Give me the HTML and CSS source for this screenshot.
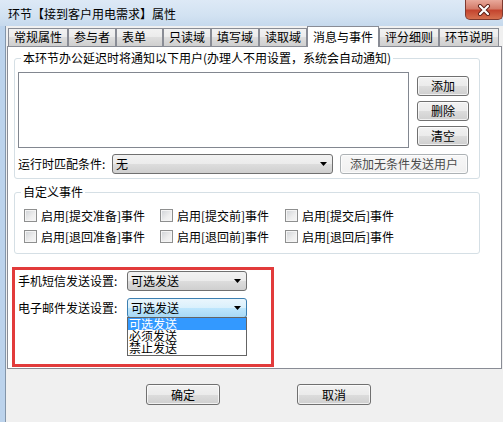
FILE: index.html
```html
<!DOCTYPE html>
<html lang="zh-CN">
<head>
  <meta charset="UTF-8" />
  <title>环节属性</title>
  <link rel="stylesheet" href="styles.css">
</head>
<body>
  <div class="window">
    <!-- Title bar -->
    <div class="titlebar">
      <span class="title">环节【接到客户用电需求】属性</span>
      <span class="close-btn">
        <svg width="14" height="12" viewBox="0 0 14 12">
          <path d="M3 2 L11 10 M11 2 L3 10" stroke="#5a1d15" stroke-width="4" stroke-linecap="round"/>
          <path d="M3 2 L11 10 M11 2 L3 10" stroke="#fff" stroke-width="2.2" stroke-linecap="round"/>
        </svg>
      </span>
    </div>

    <div class="client">
      <!-- Tabs -->
      <div class="tabs">
        <div class="tab">常规属性</div>
        <div class="tab">参与者</div>
        <div class="tab">表单</div>
        <div class="tab">只读域</div>
        <div class="tab">填写域</div>
        <div class="tab">读取域</div>
        <div class="tab active">消息与事件</div>
        <div class="tab">评分细则</div>
        <div class="tab">环节说明</div>
      </div>

      <div class="panel">
        <!-- Notify users -->
        <fieldset class="group notify">
          <legend>本环节办公延迟时将通知以下用户(办理人不用设置，系统会自动通知)</legend>
          <div class="notify-body">
            <div class="listbox"></div>
            <div class="btn-col">
              <button class="btn side-btn">添加</button>
              <button class="btn side-btn">删除</button>
              <button class="btn side-btn">清空</button>
            </div>
          </div>
          <div class="cond-row">
            <span class="cond-label">运行时匹配条件:</span>
            <div class="combo cond-combo">
              <span>无</span>
              <svg class="arrow" width="7" height="4" viewBox="0 0 7 4"><polygon points="0,0 7,0 3.5,4" fill="#000"/></svg>
            </div>
            <button class="btn add-all-btn">添加无条件发送用户</button>
          </div>
        </fieldset>

        <!-- Custom events -->
        <fieldset class="group events">
          <legend>自定义事件</legend>
          <div class="check-grid">
            <label class="check-item"><span class="check"></span>启用[提交准备]事件</label>
            <label class="check-item"><span class="check"></span>启用[提交前]事件</label>
            <label class="check-item"><span class="check"></span>启用[提交后]事件</label>
            <label class="check-item"><span class="check"></span>启用[退回准备]事件</label>
            <label class="check-item"><span class="check"></span>启用[退回前]事件</label>
            <label class="check-item"><span class="check"></span>启用[退回后]事件</label>
          </div>
        </fieldset>

        <!-- Send settings (marked) -->
        <div class="marked">
          <div class="set-row">
            <span class="set-label">手机短信发送设置:</span>
            <div class="combo set-combo">
              <span>可选发送</span>
              <svg class="arrow" width="7" height="4" viewBox="0 0 7 4"><polygon points="0,0 7,0 3.5,4" fill="#000"/></svg>
            </div>
          </div>
          <div class="set-row">
            <span class="set-label">电子邮件发送设置:</span>
            <div class="combo set-combo focused">
              <span>可选发送</span>
              <svg class="arrow" width="7" height="4" viewBox="0 0 7 4"><polygon points="0,0 7,0 3.5,4" fill="#000"/></svg>
              <ul class="dropdown">
                <li class="selected">可选发送</li>
                <li>必须发送</li>
                <li>禁止发送</li>
              </ul>
            </div>
          </div>
        </div>
      </div>

      <!-- Footer -->
      <div class="footer">
        <button class="btn footer-btn">确定</button>
        <button class="btn footer-btn">取消</button>
      </div>
    </div>
  </div>
</body>
</html>
```

FILE: styles.css
```css
*, *::before, *::after {
  box-sizing: border-box;
}
body {
  margin: 0;
  font-family: "Noto Sans CJK SC", "Noto Sans", sans-serif;
  font-size: 12px;
  line-height: 16px;
  color: #000;
}
.window {
  width: 503px;
  height: 422px;
  display: flex;
  flex-direction: column;
  overflow: hidden;
  background: #bcd3ec;
}
.titlebar {
  height: 26px;
  display: flex;
  padding-left: 8px;
  background: linear-gradient(180deg, #dde9f6 0%, #d2e2f2 60%, #c6d9ed 100%);
}
.title {
  flex: 1;
  padding-top: 6px;
}
.close-btn {
  width: 38px;
  height: 20px;
  display: flex;
  align-items: center;
  justify-content: center;
  border: 1px solid #7e3a30;
  border-top: none;
  border-radius: 0 0 5px 5px;
  background: linear-gradient(180deg, #e9a99b 0%, #d47c6a 45%, #c4452f 55%, #d5704f 100%);
}
.client {
  flex: 1;
  display: flex;
  flex-direction: column;
  margin-left: 5px;
  border-left: 1px solid #8395a9;
  background: #f0f0f0;
}
.tabs {
  height: 20px;
  display: flex;
  align-items: flex-end;
  margin-left: 2px;
}
.tab {
  height: 18px;
  min-width: 47px;
  padding: 0 5px 0 5px;
  line-height: 16px;
  border: 1px solid #898c95;
  border-bottom: none;
  background: linear-gradient(180deg, #f2f2f2 0%, #ebebeb 50%, #dddddd 50%, #cfcfcf 100%);
  white-space: nowrap;
}
.tab.active {
  height: 21px;
  margin-bottom: -1px;
  padding-top: 2px;
  position: relative;
  z-index: 1;
  background: #fff;
}
.panel {
  height: 323px;
  margin-left: 1px;
  margin-right: 1px;
  border: 1px solid #898c95;
  background: #fff;
}
.group {
  margin: 0;
  border: 1px solid #d5dfe5;
  border-radius: 3px;
  min-width: 0;
}
.group legend {
  padding: 0 2px;
  margin-left: 3px;
  line-height: 16px;
}
.notify {
  width: 466px;
  margin: 3px 0 0 6px;
  padding: 6px 3px 4px 3px;
}
.notify-body {
  display: flex;
}
.listbox {
  width: 391px;
  height: 76px;
  border: 1px solid #828790;
  background: #fff;
}
.btn-col {
  display: flex;
  flex-direction: column;
  gap: 5px;
  margin-left: 8px;
  padding-top: 4px;
}
.btn {
  font-family: inherit;
  font-size: 12px;
  line-height: 16px;
  padding: 0;
  color: #000;
  border: 1px solid #707070;
  border-radius: 3px;
  background: linear-gradient(180deg, #f2f2f2 0%, #ebebeb 50%, #dddddd 50%, #cfcfcf 100%);
  box-shadow: inset 0 0 0 1px rgba(255, 255, 255, 0.7);
}
.side-btn {
  width: 52px;
  height: 20px;
}
.cond-row {
  display: flex;
  align-items: center;
  margin-top: 6px;
}
.cond-label {
  width: 94px;
}
.combo {
  position: relative;
  height: 20px;
  display: flex;
  align-items: center;
  padding-left: 3px;
  border: 1px solid #707070;
  border-radius: 3px;
  background: linear-gradient(180deg, #f2f2f2 0%, #ebebeb 50%, #dddddd 50%, #cfcfcf 100%);
}
.combo span {
  flex: 1;
}
.combo .arrow {
  margin-right: 5px;
}
.cond-combo {
  width: 221px;
}
.add-all-btn {
  width: 128px;
  height: 20px;
  margin-left: 7px;
  color: #4a4a4a;
  border-color: #adb2b5;
  background: linear-gradient(180deg, #f7f7f7 0%, #f0f0f0 100%);
}
.events {
  width: 466px;
  margin: 5px 0 0 6px;
  padding: 5px 3px 6px 3px;
}
.check-grid {
  display: grid;
  grid-template-columns: 136px 125px auto;
  grid-auto-rows: 21px;
  margin-left: 6px;
}
.check-item {
  display: flex;
  align-items: center;
  gap: 4px;
  white-space: nowrap;
}
.check {
  width: 13px;
  height: 13px;
  border: 1px solid #8e8f8f;
  background: linear-gradient(135deg, #cfd2d6 0%, #eeeeee 60%, #f6f6f6 100%);
  box-shadow: inset 0 0 0 1px #f4f4f4;
}
.marked {
  width: 262px;
  height: 100px;
  margin: 13px 0 0 4px;
  padding: 1px 0 0 3px;
  border: 3px solid #e23b3b;
  display: flex;
  flex-direction: column;
  gap: 7px;
}
.set-row {
  display: flex;
  align-items: center;
}
.set-label {
  width: 109px;
}
.set-combo {
  width: 120px;
}
.set-combo.focused {
  border-color: #3c7fb1;
  background: linear-gradient(180deg, #eaf6fd 0%, #d9f0fc 50%, #bee6fd 50%, #a7d9f5 100%);
}
.dropdown {
  position: absolute;
  top: 18px;
  left: -1px;
  width: 120px;
  margin: 0;
  padding: 0 0 1px 0;
  list-style: none;
  border: 1px solid #646464;
  background: #fff;
}
.dropdown li {
  height: 12px;
  line-height: 12px;
  padding-left: 1px;
}
.dropdown li.selected {
  background: #3399ff;
  color: #fff;
}
.footer {
  flex: 1;
  display: flex;
  gap: 77px;
  padding: 15px 0 0 140px;
}
.footer-btn {
  width: 74px;
  height: 21px;
}
```
